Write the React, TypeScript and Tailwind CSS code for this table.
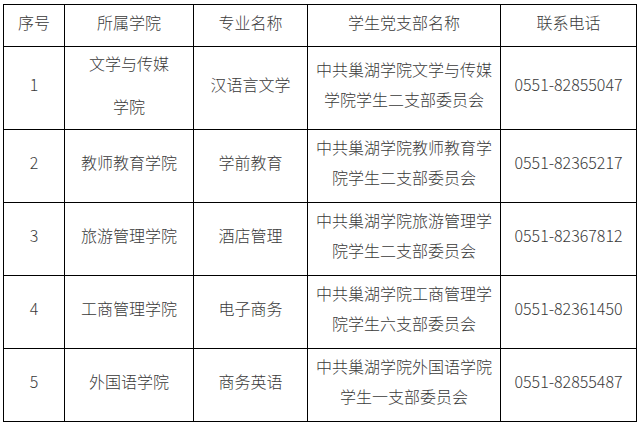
import React from "react";

const rows: { n: string; college: string[]; major: string; branch: string[]; phone: string }[] = [
  { n: "1", college: ["文学与传媒", "学院"], major: "汉语言文学", branch: ["中共巢湖学院文学与传媒", "学院学生二支部委员会"], phone: "0551-82855047" },
  { n: "2", college: ["教师教育学院"], major: "学前教育", branch: ["中共巢湖学院教师教育学", "院学生二支部委员会"], phone: "0551-82365217" },
  { n: "3", college: ["旅游管理学院"], major: "酒店管理", branch: ["中共巢湖学院旅游管理学", "院学生二支部委员会"], phone: "0551-82367812" },
  { n: "4", college: ["工商管理学院"], major: "电子商务", branch: ["中共巢湖学院工商管理学", "院学生六支部委员会"], phone: "0551-82361450" },
  { n: "5", college: ["外国语学院"], major: "商务英语", branch: ["中共巢湖学院外国语学院", "学生一支部委员会"], phone: "0551-82855487" },
];

const cell =
  "border-r border-b border-black flex flex-col items-center justify-center text-center pb-[8px] leading-[30px] whitespace-nowrap";

export default function App() {
  return (
    <div
      className="w-[642px] h-[424px] bg-white pl-[3px] pt-[4px] text-[16px] text-[#3a3a3a] font-light"
      style={{ fontFamily: '"Noto Sans CJK SC", "Noto Sans", sans-serif' }}
    >
      <div className="grid grid-cols-[61px_129px_114px_193px_136px] grid-rows-[42px_83px_73px_73px_73px_73px] border-l border-t border-black w-[634px]">
        <div className={cell}>序号</div>
        <div className={cell}>所属学院</div>
        <div className={cell}>专业名称</div>
        <div className={cell}>学生党支部名称</div>
        <div className={cell}>联系电话</div>
        {rows.map((r) => (
          <React.Fragment key={r.n}>
            <div className={cell}>{r.n}</div>
            <div className={cell + (r.college.length > 1 ? " gap-[13px]" : "")}>
              {r.college.map((c) => (
                <div key={c}>{c}</div>
              ))}
            </div>
            <div className={cell}>{r.major}</div>
            <div className={cell}>
              {r.branch.map((b) => (
                <div key={b}>{b}</div>
              ))}
            </div>
            <div className={cell}>{r.phone}</div>
          </React.Fragment>
        ))}
      </div>
    </div>
  );
}
